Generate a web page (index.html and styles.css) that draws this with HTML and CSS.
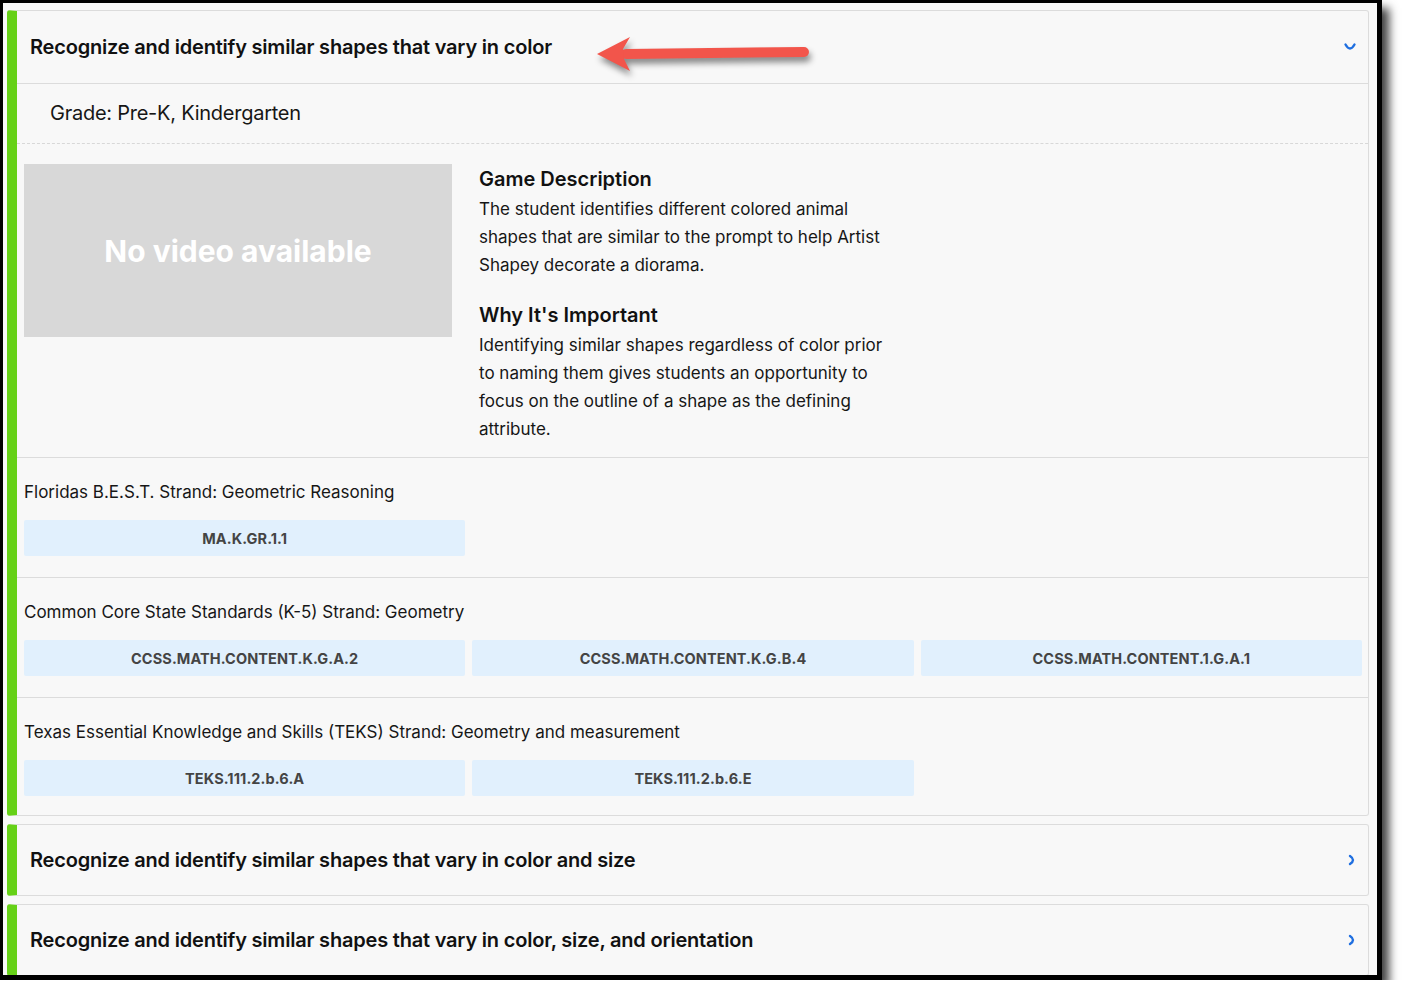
FILE: index.html
```html
<!DOCTYPE html>
<html lang="en">
<head>
<meta charset="utf-8">
<title>Games</title>
<link rel="stylesheet" href="styles.css">
</head>
<body>
<div class="frame">
  <div class="page">
    <section class="card open">
      <header class="card-head">
        <h2 class="card-title">Recognize and identify similar shapes that vary in color</h2>
        <svg class="chev" width="14" height="10" viewBox="0 0 14 10"><path d="M2.5 2.5 Q7 10.5 11.5 2.5" fill="none" stroke="#1f6fe0" stroke-width="2.4" stroke-linecap="round"/></svg>
      </header>
      <div class="grade">Grade: Pre-K, Kindergarten</div>
      <div class="detail">
        <div class="video">No video available</div>
        <div class="desc">
          <h3 class="desc-title">Game Description</h3>
          <p class="desc-text">The student identifies different colored animal shapes that are similar to the prompt to help Artist Shapey decorate a diorama.</p>
          <h3 class="desc-title second">Why It's Important</h3>
          <p class="desc-text">Identifying similar shapes regardless of color prior to naming them gives students an opportunity to focus on the outline of a shape as the defining attribute.</p>
        </div>
      </div>
      <div class="std">
        <div class="std-label">Floridas B.E.S.T. Strand: Geometric Reasoning</div>
        <div class="chips">
          <span class="chip">MA.K.GR.1.1</span>
        </div>
      </div>
      <div class="std">
        <div class="std-label">Common Core State Standards (K-5) Strand: Geometry</div>
        <div class="chips">
          <span class="chip">CCSS.MATH.CONTENT.K.G.A.2</span>
          <span class="chip">CCSS.MATH.CONTENT.K.G.B.4</span>
          <span class="chip">CCSS.MATH.CONTENT.1.G.A.1</span>
        </div>
      </div>
      <div class="std">
        <div class="std-label">Texas Essential Knowledge and Skills (TEKS) Strand: Geometry and measurement</div>
        <div class="chips">
          <span class="chip">TEKS.111.2.b.6.A</span>
          <span class="chip">TEKS.111.2.b.6.E</span>
        </div>
      </div>
    </section>
    <section class="card">
      <header class="card-head closed">
        <h2 class="card-title">Recognize and identify similar shapes that vary in color and size</h2>
        <svg class="chev" width="12" height="12" viewBox="0 0 12 12"><path d="M4 2 Q10 6 4 10" fill="none" stroke="#1f6fe0" stroke-width="2.4" stroke-linecap="round"/></svg>
      </header>
    </section>
    <section class="card">
      <header class="card-head closed">
        <h2 class="card-title">Recognize and identify similar shapes that vary in color, size, and orientation</h2>
        <svg class="chev" width="12" height="12" viewBox="0 0 12 12"><path d="M4 2 Q10 6 4 10" fill="none" stroke="#1f6fe0" stroke-width="2.4" stroke-linecap="round"/></svg>
      </header>
    </section>
  </div>
  <svg class="arrow" width="240" height="56" viewBox="590 28 240 56">
    <line x1="626" y1="54" x2="804" y2="52" stroke="#f2554b" stroke-width="10" stroke-linecap="round"/>
    <polygon points="597,54 630,37 623,49 624,59 630,71" fill="#f2554b"/>
  </svg>
</div>
</body>
</html>
```

FILE: styles.css
```css
* { box-sizing: border-box; }
html, body { margin: 0; padding: 0; background: #ffffff; }
body { font-family: "Inter", "Noto Sans", sans-serif; color: #161616; }

.frame {
  position: relative;
  width: 1382px;
  height: 980px;
  border-style: solid;
  border-color: #000;
  border-width: 3px 5px 5px 3px;
  background: #f8f8f8;
  box-shadow: 7px 8px 9px rgba(0, 0, 0, 0.75);
  overflow: hidden;
}

.page {
  padding: 7px 8px 0 4px;
  display: flex;
  flex-direction: column;
  gap: 8px;
}

.card {
  background: #f8f8f8;
  border: 1px solid #dcdcdc;
  border-left: 10px solid #66d117;
  border-radius: 3px;
}

.card-head {
  height: 73px;
  display: flex;
  align-items: center;
  justify-content: space-between;
  padding: 0 11px 0 13px;
  border-bottom: 1px solid #dcdcdc;
}
.card-head.closed {
  height: 70px;
  border-bottom: none;
  padding-right: 10px;
}

.card-title {
  margin: 0;
  font-size: 20px;
  font-weight: 600;
  letter-spacing: -0.2px;
  color: #111;
}

.chev { display: block; }

.grade {
  height: 60px;
  display: flex;
  align-items: center;
  padding: 0 0 2px 33px;
  font-size: 20px;
  letter-spacing: -0.25px;
  border-bottom: 1px dashed #d8d8d8;
}

.detail {
  display: flex;
  align-items: flex-start;
  padding: 20px 6px 14px 7px;
  border-bottom: 1px solid #dcdcdc;
}

.video {
  width: 428px;
  height: 173px;
  background: #d8d8d8;
  color: #fff;
  font-weight: 700;
  font-size: 30px;
  display: flex;
  align-items: center;
  justify-content: center;
  flex: none;
}

.desc {
  width: 415px;
  margin-left: 27px;
  padding-top: 1px;
}

.desc-title {
  margin: 0 0 2px;
  font-size: 20px;
  line-height: 28px;
  font-weight: 600;
  color: #111;
}
.desc-title.second { margin-top: 22px; }

.desc-text {
  margin: 0;
  font-size: 17px;
  line-height: 28px;
}

.std {
  padding: 20px 6px 21px 7px;
  border-bottom: 1px solid #dcdcdc;
}
.std:last-child {
  border-bottom: none;
  padding-bottom: 19px;
}

.std-label {
  font-size: 17px;
  line-height: 28px;
  margin-bottom: 14px;
}

.chips {
  display: grid;
  grid-template-columns: repeat(3, 1fr);
  gap: 7px;
}

.chip {
  height: 36px;
  background: #e1f0fd;
  border-radius: 2px;
  color: #444;
  font-size: 14.5px;
  font-weight: 700;
  letter-spacing: 0.1px;
  display: flex;
  align-items: center;
  justify-content: center;
}

.arrow {
  position: absolute;
  left: 587px;
  top: 25px;
  filter: drop-shadow(2px 5px 3px rgba(0, 0, 0, 0.45));
}
```
